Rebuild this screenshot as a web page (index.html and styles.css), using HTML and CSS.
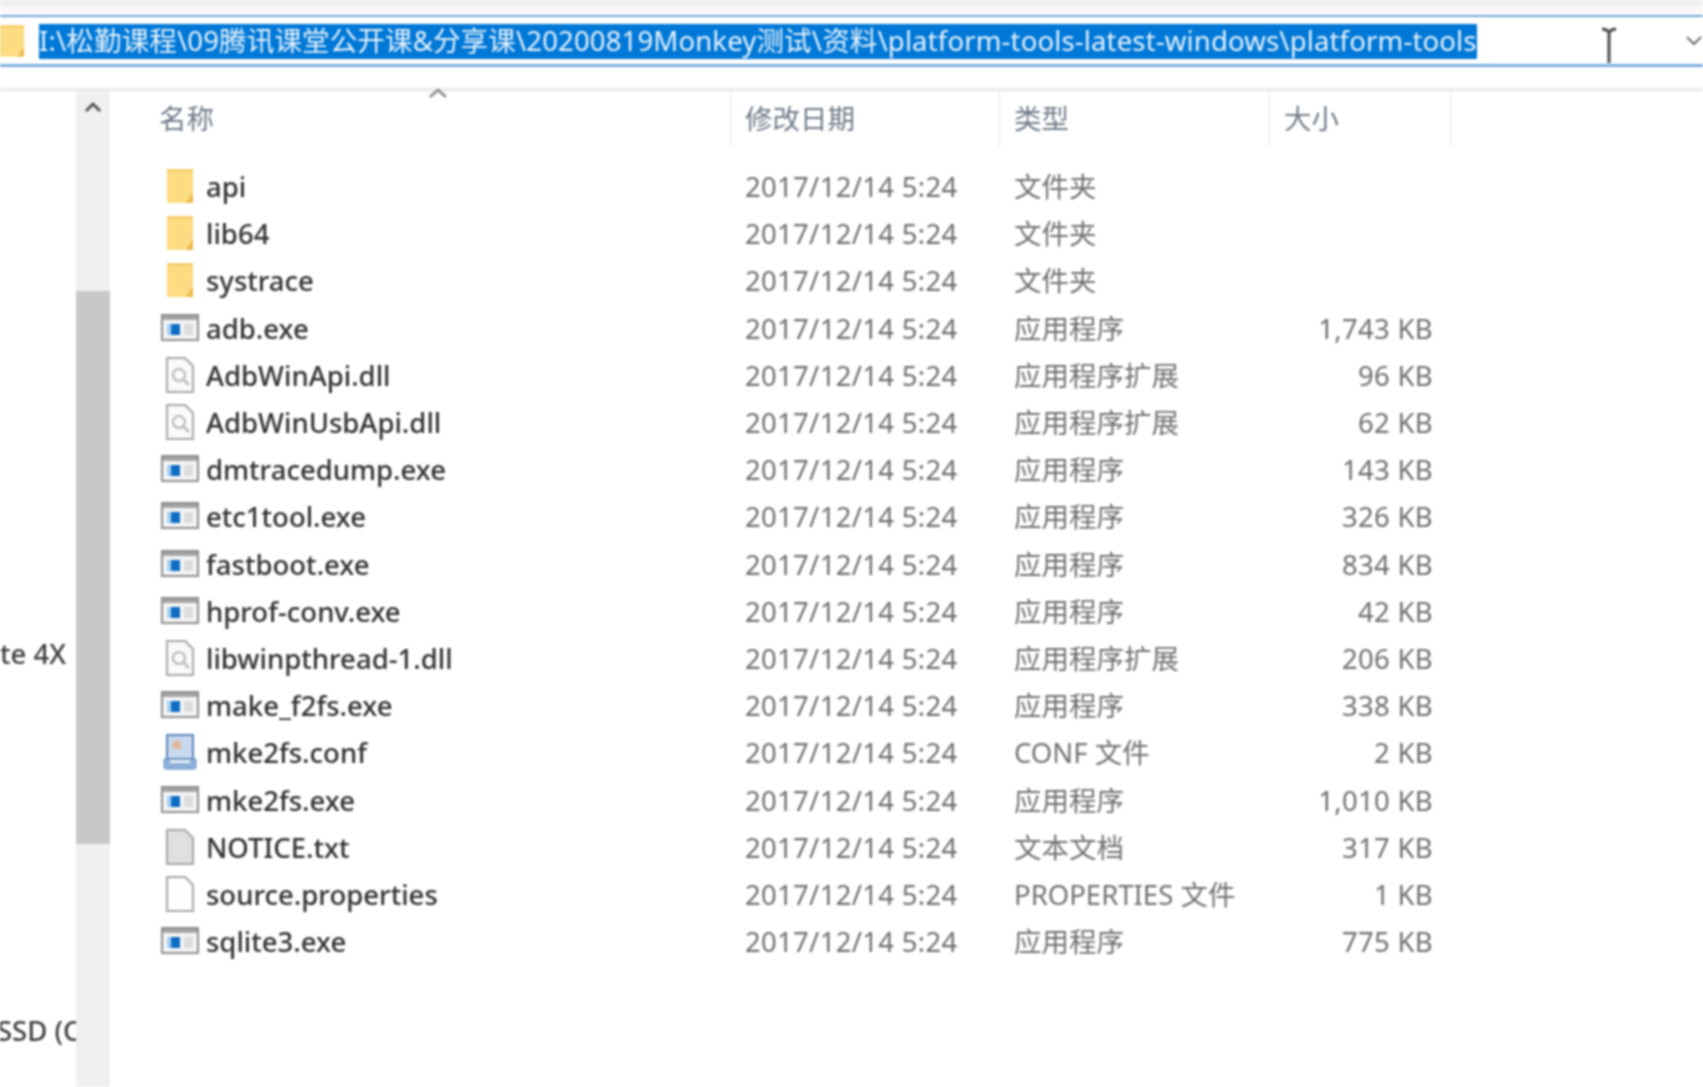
FILE: index.html
```html
<!DOCTYPE html>
<html>
<head>
<meta charset="utf-8" />
<title>platform-tools</title>
<link rel="stylesheet" href="styles.css">
</head>
<body>
<svg class="defs" width="0" height="0">
  <symbol id="i-folder" viewBox="0 0 28 36">
    <path d="M1 1h26v34H1z" fill="#fbdc82"/>
    <path d="M20 35 27 24v11z" fill="#eeb94a"/>
    <path d="M1 1h26v3H1z" fill="#f6cf6c"/>
  </symbol>
  <symbol id="i-exe" viewBox="0 0 38 27">
    <path d="M1 1h36v25H1z" fill="#f4f4f4" stroke="#8e8e8e" stroke-width="2"/>
    <path d="M2 2h34v4H2z" fill="#a4a4a4"/>
    <path d="M10 10h9v11h-9z" fill="#0f6cc4"/>
    <path d="M6 10h4v11H6z" fill="#a9d2f2"/>
    <path d="M23 10h9v11h-9z" fill="#dcdcdc"/>
  </symbol>
  <symbol id="i-dll" viewBox="0 0 28 36">
    <path d="M1 1h18l8 8v26H1z" fill="#fafafa" stroke="#a6a6a6" stroke-width="2"/>
    <circle cx="13" cy="18" r="6" fill="none" stroke="#b4b4b4" stroke-width="2"/>
    <path d="M17 22l6 6" stroke="#c0c0c0" stroke-width="3"/>
  </symbol>
  <symbol id="i-conf" viewBox="0 0 34 36">
    <path d="M4 1h26v24H4z" fill="#c8d9ee" stroke="#5c86b5" stroke-width="2"/>
    <path d="M10 7h8v8h-8z" fill="#e0b99c"/>
    <path d="M1 25h32v8q0 2-2 2H3q-2 0-2-2z" fill="#8fb2da" stroke="#5f8dc0" stroke-width="1"/>
    <path d="M7 26h20v3H7z" fill="#e6eef8"/>
  </symbol>
  <symbol id="i-txt" viewBox="0 0 28 36">
    <path d="M1 1h18l8 8v26H1z" fill="#e0e0e0" stroke="#a6a6a6" stroke-width="2"/>
  </symbol>
  <symbol id="i-file" viewBox="0 0 28 36">
    <path d="M1 1h18l8 8v26H1z" fill="#fdfdfd" stroke="#a6a6a6" stroke-width="2"/>
  </symbol>
</svg>

<div class="window">
  <div class="top-strip"></div>
  <div class="addr">
    <svg class="addr-folder" viewBox="0 0 28 36"><use href="#i-folder"/></svg>
    <div class="addr-path"><span class="selected">I:\松勤课程\09腾讯课堂公开课&amp;分享课\20200819Monkey测试\资料\platform-tools-latest-windows\platform-tools</span></div>
    <svg class="addr-drop" viewBox="0 0 16 10"><path d="M1 1l7 7 7-7" fill="none" stroke="#6e6e6e" stroke-width="2"/></svg>
    <svg class="ibeam" viewBox="0 0 16 38"><path d="M1 2q4 0 7 3 3-3 7-3M8 5v31" fill="none" stroke="#4a4a4a" stroke-width="3"/></svg>
  </div>
  <div class="toolbar-end"></div>

  <div class="main">
    <div class="nav">
      <div class="nav-item nav-lite">te 4X</div>
      <div class="nav-item nav-ssd">SSD (C</div>
    </div>
    <div class="scroll">
      <svg class="scroll-up" viewBox="0 0 18 12"><path d="M2 10l7-7 7 7" fill="none" stroke="#555" stroke-width="3"/></svg>
      <div class="scroll-thumb"></div>
    </div>
    <div class="list">
      <div class="head">
        <svg class="sort" viewBox="0 0 20 10"><path d="M2 9l8-7 8 7" fill="none" stroke="#8c8c8c" stroke-width="2.5"/></svg>
        <div class="th th-name">名称</div>
        <div class="th th-date">修改日期</div>
        <div class="th th-type">类型</div>
        <div class="th th-size">大小</div>
      </div>
      <div class="rows">
        <div class="row"><span class="name"><svg class="ic ic-doc"><use href="#i-folder"/></svg>api</span><span class="date">2017/12/14 5:24</span><span class="type">文件夹</span><span class="size"></span></div>
        <div class="row"><span class="name"><svg class="ic ic-doc"><use href="#i-folder"/></svg>lib64</span><span class="date">2017/12/14 5:24</span><span class="type">文件夹</span><span class="size"></span></div>
        <div class="row"><span class="name"><svg class="ic ic-doc"><use href="#i-folder"/></svg>systrace</span><span class="date">2017/12/14 5:24</span><span class="type">文件夹</span><span class="size"></span></div>
        <div class="row"><span class="name"><svg class="ic ic-exe"><use href="#i-exe"/></svg>adb.exe</span><span class="date">2017/12/14 5:24</span><span class="type">应用程序</span><span class="size">1,743 KB</span></div>
        <div class="row"><span class="name"><svg class="ic ic-doc"><use href="#i-dll"/></svg>AdbWinApi.dll</span><span class="date">2017/12/14 5:24</span><span class="type">应用程序扩展</span><span class="size">96 KB</span></div>
        <div class="row"><span class="name"><svg class="ic ic-doc"><use href="#i-dll"/></svg>AdbWinUsbApi.dll</span><span class="date">2017/12/14 5:24</span><span class="type">应用程序扩展</span><span class="size">62 KB</span></div>
        <div class="row"><span class="name"><svg class="ic ic-exe"><use href="#i-exe"/></svg>dmtracedump.exe</span><span class="date">2017/12/14 5:24</span><span class="type">应用程序</span><span class="size">143 KB</span></div>
        <div class="row"><span class="name"><svg class="ic ic-exe"><use href="#i-exe"/></svg>etc1tool.exe</span><span class="date">2017/12/14 5:24</span><span class="type">应用程序</span><span class="size">326 KB</span></div>
        <div class="row"><span class="name"><svg class="ic ic-exe"><use href="#i-exe"/></svg>fastboot.exe</span><span class="date">2017/12/14 5:24</span><span class="type">应用程序</span><span class="size">834 KB</span></div>
        <div class="row"><span class="name"><svg class="ic ic-exe"><use href="#i-exe"/></svg>hprof-conv.exe</span><span class="date">2017/12/14 5:24</span><span class="type">应用程序</span><span class="size">42 KB</span></div>
        <div class="row"><span class="name"><svg class="ic ic-doc"><use href="#i-dll"/></svg>libwinpthread-1.dll</span><span class="date">2017/12/14 5:24</span><span class="type">应用程序扩展</span><span class="size">206 KB</span></div>
        <div class="row"><span class="name"><svg class="ic ic-exe"><use href="#i-exe"/></svg>make_f2fs.exe</span><span class="date">2017/12/14 5:24</span><span class="type">应用程序</span><span class="size">338 KB</span></div>
        <div class="row"><span class="name"><svg class="ic ic-conf"><use href="#i-conf"/></svg>mke2fs.conf</span><span class="date">2017/12/14 5:24</span><span class="type">CONF 文件</span><span class="size">2 KB</span></div>
        <div class="row"><span class="name"><svg class="ic ic-exe"><use href="#i-exe"/></svg>mke2fs.exe</span><span class="date">2017/12/14 5:24</span><span class="type">应用程序</span><span class="size">1,010 KB</span></div>
        <div class="row"><span class="name"><svg class="ic ic-doc"><use href="#i-txt"/></svg>NOTICE.txt</span><span class="date">2017/12/14 5:24</span><span class="type">文本文档</span><span class="size">317 KB</span></div>
        <div class="row"><span class="name"><svg class="ic ic-doc"><use href="#i-file"/></svg>source.properties</span><span class="date">2017/12/14 5:24</span><span class="type">PROPERTIES 文件</span><span class="size">1 KB</span></div>
        <div class="row"><span class="name"><svg class="ic ic-exe"><use href="#i-exe"/></svg>sqlite3.exe</span><span class="date">2017/12/14 5:24</span><span class="type">应用程序</span><span class="size">775 KB</span></div>
      </div>
    </div>
  </div>
</div>
</body>
</html>
```

FILE: styles.css
```css
html, body { margin: 0; padding: 0; height: 100%; overflow: hidden; background: #fff; }
body { font-family: "Noto Sans", "Noto Sans CJK SC", sans-serif; font-size: 27.5px; color: #3a3a3a; }
.defs { position: absolute; }
.window { height: 1087px; display: flex; flex-direction: column; filter: blur(0.9px); }

.top-strip { height: 15px; background: linear-gradient(#ececec, #f6f6f6 50%, #fdfdfd); flex: none; }
.addr { position: relative; height: 47px; flex: none; display: flex; align-items: center; background: #fff; border-top: 2px solid #6fa5d6; border-bottom: 3px solid #7aafdd; }
.addr-folder { width: 26px; height: 36px; margin-left: -1px; flex: none; }
.addr-path { margin-left: 14px; flex: 1; white-space: nowrap; }
.selected { display: inline-block; height: 35px; line-height: 34px; background: #0078d7; color: #e6f2fb; letter-spacing: 0.15px; }
.addr-drop { width: 16px; height: 10px; margin-right: 1px; flex: none; }
.ibeam { position: absolute; left: 1601px; top: 10px; width: 16px; height: 38px; }

.toolbar-end { height: 24px; flex: none; background: linear-gradient(#fff 80%, #e2e2e0); }

.main { flex: 1; display: flex; min-height: 0; }
.nav { width: 76px; flex: none; overflow: hidden; }
.nav-item { white-space: nowrap; font-weight: 500; color: #3e3e3e; line-height: 36px; }
.nav-lite { margin: 545px 0 0 0; }
.nav-ssd { margin: 341px 0 0 -3px; }
.scroll { width: 34px; flex: none; background: #f0f0f0; display: flex; flex-direction: column; }
.scroll-up { width: 18px; height: 12px; margin: 10px 0 0 8px; flex: none; }
.scroll-thumb { height: 553px; margin-top: 178px; background: #c8c8c8; flex: none; }

.list { flex: 1; min-width: 0; }
.head { position: relative; display: grid; grid-template-columns: 621px 269px 270px 181px; height: 58px; }
.sort { position: absolute; left: 318px; top: -3px; width: 20px; height: 10px; }
.th { color: #6f7b88; padding-top: 6px; line-height: 44px; height: 56px; box-sizing: border-box; border-right: 1px solid #e4e8ec; }
.th-name { padding-left: 49px; }
.th-date { padding-left: 14px; }
.th-type { padding-left: 14px; }
.th-size { padding-left: 14px; }

.rows { display: flex; flex-direction: column; padding-top: 14px; }
.row { display: grid; grid-template-columns: 621px 269px 270px 163px; height: 47.2px; line-height: 47px; align-items: center; }
.name { display: flex; align-items: center; color: #303030; font-weight: 500; white-space: nowrap; padding-left: 96px; position: relative; }
.date { padding-left: 14px; color: #6e6e6e; white-space: nowrap; letter-spacing: 0.3px; }
.type { padding-left: 14px; color: #707070; white-space: nowrap; }
.size { text-align: right; color: #6e6e6e; white-space: nowrap; letter-spacing: 0.3px; }
.ic { position: absolute; }
.ic-doc { left: 56px; top: 5px; width: 28px; height: 36px; }
.ic-exe { left: 51px; top: 9px; width: 38px; height: 27px; }
.ic-conf { left: 53px; top: 5px; width: 34px; height: 36px; }
```
